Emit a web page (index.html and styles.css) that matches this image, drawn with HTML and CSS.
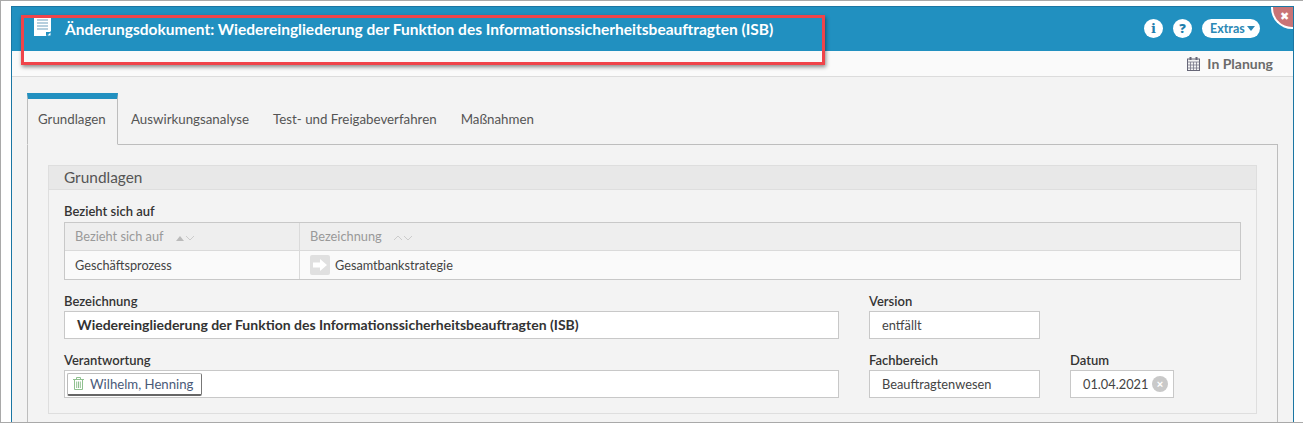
FILE: index.html
```html
<!DOCTYPE html>
<html lang="de">
<head>
<meta charset="utf-8">
<title>Änderungsdokument</title>
<link rel="stylesheet" href="styles.css">
</head>
<body>
<div class="frame">
  <div class="window">
    <header class="head">
      <svg class="doc" width="17" height="19" viewBox="0 0 17 19"><path d="M0 0h17v14l-5 5H0z" fill="#fff"/><path d="M3 3h11M3 6h11M3 9h11M3 12h11" stroke="#6f9fbd" stroke-width="1.2"/><path d="M12 19v-4h5z" fill="#2190c0"/><path d="M13.500 18.500l3-3v3z" fill="#fff"/></svg>
      <h1 class="title">Änderungsdokument: Wiedereingliederung der Funktion des Informationssicherheitsbeauftragten (ISB)</h1>
      <div class="tools">
        <span class="round info">i</span>
        <span class="round">?</span>
        <span class="extras">Extras<i class="caret"></i></span>
      </div>
      <span class="close">✖</span>
    </header>
    <div class="status">
      <svg width="13" height="14" viewBox="0 0 13 14"><rect x=".5" y="2" width="12" height="11.500" fill="#f3f3f3" stroke="#667" /><path d="M.5 5h12M.5 8h12M.5 11h12M3.500 5v8M6.500 5v8M9.500 5v8" stroke="#778" stroke-width=".8"/><path d="M3.500 0v3M9.500 0v3" stroke="#667" stroke-width="2"/></svg>
      <b>In Planung</b>
    </div>
    <main class="content">
      <nav class="tabs">
        <a class="tab active">Grundlagen</a>
        <a class="tab">Auswirkungsanalyse</a>
        <a class="tab">Test- und Freigabeverfahren</a>
        <a class="tab">Maßnahmen</a>
      </nav>
      <section class="tabpanel">
        <div class="group">
          <div class="group-title">Grundlagen</div>
          <div class="group-body">
            <label class="lbl">Bezieht sich auf</label>
            <div class="table">
              <div class="th first">Bezieht sich auf <svg class="sort" width="20" height="6" viewBox="0 0 20 6"><path d="M0 6l4-5 4 5z" fill="#bbb"/><path d="M10 1l4 4 4-4" fill="none" stroke="#ccc"/></svg></div>
              <div class="th">Bezeichnung <svg class="sort" width="20" height="6" viewBox="0 0 20 6"><path d="M0 5l4-4 4 4M10 1l4 4 4-4" fill="none" stroke="#ccc"/></svg></div>
              <div class="td first">Geschäftsprozess</div>
              <div class="td"><span class="arrow"><svg width="14" height="12" viewBox="0 0 14 12"><path d="M0 3.500h7V0l7 6-7 6V8.500H0z" fill="#fff"/></svg></span>Gesamtbankstrategie</div>
            </div>
            <div class="form">
              <div class="field f-name"><label class="lbl">Bezeichnung</label><div class="input strong">Wiedereingliederung der Funktion des Informationssicherheitsbeauftragten (ISB)</div></div>
              <div class="field f-ver"><label class="lbl">Version</label><div class="input">entfällt</div></div>
              <div class="field f-name"><label class="lbl">Verantwortung</label><div class="input tagbox"><span class="tag"><svg width="11" height="13" viewBox="0 0 11 13"><path d="M0 2.500h11M3.500 2V.5h4V2M1.500 3v9.500h8V3M3.700 4.500v6.500M5.500 4.500v6.500M7.300 4.500v6.500" fill="none" stroke="#8fc08f"/></svg>Wilhelm, Henning</span></div></div>
              <div class="field f-ver"><label class="lbl">Fachbereich</label><div class="input">Beauftragtenwesen</div></div>
              <div class="field f-date"><label class="lbl">Datum</label><div class="input date">01.04.2021<span class="clear">×</span></div></div>
            </div>
          </div>
        </div>
      </section>
    </main>
  </div>
  <div class="annot"></div>
</div>
</body>
</html>
```
FILE: styles.css
```css
* { box-sizing: border-box; }
html, body { margin: 0; height: 423px; overflow: hidden; background: #fff; }
body { font-family: "Lato", "Noto Sans", sans-serif; color: #444; }
.frame { position: relative; height: 423px; border: 1px solid #a9a9a9; border-width: 1px 0 1px 1px; padding: 5px 9px 0 10px; }
.window { height: 416px; border: 1px solid #1a76a3; border-bottom: 0; background: #f3f3f3; overflow: hidden; position: relative; }
.head { height: 44px; background: #2190c0; display: flex; align-items: center; padding: 0 33px 1px 22px; }
.doc { margin-right: 14px; flex: none; margin-top: -4px; }
.title { margin: 0; flex: 1; font: 700 15.500px/20px "Lato", sans-serif; color: #fff; white-space: nowrap; }
.tools { display: flex; align-items: center; gap: 10px; }
.round { width: 19px; height: 19px; border-radius: 50%; background: #fff; color: #1f7fad; font: 900 13px/19px "Noto Sans", sans-serif; text-align: center; }
.info { font: 700 13px/19px "DejaVu Serif", serif; }
.extras { height: 19px; width: 58px; padding: 0 0 0 8px; border-radius: 10px; background: #fff; color: #2b88b5; font: 700 12.500px/18px "Lato", sans-serif; display: flex; align-items: center; gap: 1px; }
.caret { width: 0; height: 0; border: 4px solid transparent; border-top: 5px solid #2b88b5; border-bottom: 0; margin-left: 1px; }
.close { position: absolute; top: 0; right: 0; width: 22px; height: 22px; border-bottom-left-radius: 21px; background: #c97476; border-left: 2px solid #fff; border-bottom: 2px solid #fff; padding-left: 3px; color: #fff; font: 700 11px/19px "DejaVu Sans", sans-serif; text-align: center; }
.status { height: 26px; background: #fafafa; border-bottom: 1px solid #dcdcdc; display: flex; justify-content: flex-end; align-items: center; gap: 7px; padding: 0 20px 0 0; font: 700 14px/16px "Lato", sans-serif; color: #6b6b6b; }
.status b { font-weight: 700; }
.content { padding: 16px 15px 0 15px; }
.tabs { display: flex; height: 52px; position: relative; z-index: 1; }
.tab { padding: 16px 12px 0 12px; font: 400 13.300px/20px "Lato", sans-serif; color: #555; height: 52px; white-space: nowrap; }
.tab.active { width: 91px; border: 1px solid #bdbdbd; border-top: 6px solid #2190c0; border-bottom: 1px solid #f3f3f3; padding: 10px 0 0 10px; margin-right: 1px; color: #555; }
.tabpanel { margin-top: -1px; width: 1251px; border: 1px solid #bdbdbd; padding: 20px 20px 0 20px; height: 300px; }
.group { border: 1px solid #dedede; height: 249px; }
.group-title { height: 24px; background: #e8e8e8; border-bottom: 1px solid #dedede; padding-left: 15px; font: 400 15.400px/22px "Lato", sans-serif; color: #555; }
.group-body { padding: 13px 15px 0 15px; }
.lbl { display: block; font: 600 13px/16px "Lato", sans-serif; color: #333; }
.table { display: grid; grid-template-columns: 235px 1fr; margin-top: 3px; border: 1px solid #c8c8c8; width: 1177px; }
.th { height: 28px; background: #eee; border-bottom: 1px solid #dadada; color: #999; font: 400 12.800px/27px "Lato", sans-serif; padding-left: 10px; }
.td { height: 28px; background: #fafafa; font: 400 12.700px/28px "Lato", sans-serif; color: #444; padding-left: 10px; display: flex; align-items: center; }
.first { border-right: 1px solid #dadada; }
.sort { margin-left: 9px; }
.arrow { width: 20px; height: 20px; border-radius: 2px; background: #e0e0e0; display: inline-flex; align-items: center; justify-content: center; margin-right: 5px; }
.form { display: grid; grid-template-columns: 775px 171px 104px; column-gap: 30px; row-gap: 14px; margin-top: 14px; }
.field { min-width: 0; }
.f-name { grid-column: 1; }
.f-ver { grid-column: 2; }
.f-date { grid-column: 3; }
.form .lbl { height: 15px; line-height: 14px; }
.input { height: 28px; margin-top: 2px; background: #fff; border: 1px solid #c8c8c8; font: 400 12.800px/26px "Lato", sans-serif; color: #444; padding-left: 12px; white-space: nowrap; }
.input.strong { font-size: 14px; font-weight: 700; color: #333; }
.tagbox { padding-left: 2px; display: flex; align-items: center; }
.tag { height: 23px; width: 135px; border: 1px solid #bbb; border-bottom: 2px solid #666; border-right-color: #777; border-radius: 2px; padding-left: 5px; display: flex; align-items: center; gap: 6px; color: #4a5a78; font-size: 13.200px; line-height: 20px; }
.date { display: flex; align-items: center; justify-content: space-between; padding-right: 5px; }
.clear { width: 16px; height: 16px; border-radius: 50%; background: #c9c9c9; color: #fff; font: 700 11px/16px "Liberation Sans", sans-serif; text-align: center; }
.annot { position: absolute; left: 20px; top: 14px; width: 804px; height: 50px; border: 3px solid #f0444a; box-shadow: 1px 2px 4px rgba(0,0,0,.45); pointer-events: none; }
```
